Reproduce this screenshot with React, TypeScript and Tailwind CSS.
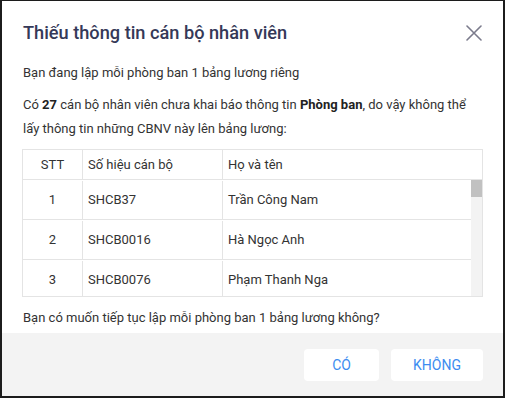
const rows = [
  { stt: 1, code: "SHCB37", name: "Trần Công Nam" },
  { stt: 2, code: "SHCB0016", name: "Hà Ngọc Anh" },
  { stt: 3, code: "SHCB0076", name: "Phạm Thanh Nga" },
];

const App = () => {
  return (
    <div className="h-[400px] w-[506px] bg-white font-['Roboto',sans-serif] text-[13px] text-[#333]">
      <div className="flex h-[398px] w-[505px] flex-col border-t border-r-2 border-b-2 border-l-2 border-[#1c1c1c]">
        {/* header */}
        <div className="flex h-[60px] items-center justify-between pt-[3px] pr-[21px] pl-[21px]">
          <h1 className="text-[18.2px] font-medium text-[#353958]">
            Thiếu thông tin cán bộ nhân viên
          </h1>
          <svg width="16" height="16" viewBox="0 0 16 16" className="text-[#7b7b8c]">
            <path d="M1 1L15 15M15 1L1 15" stroke="currentColor" strokeWidth="1.6" strokeLinecap="round" />
          </svg>
        </div>

        {/* body */}
        <div className="flex flex-col pr-[20px] pb-[3px] pl-[20px] leading-6">
          <p className="pl-px">Bạn đang lập mỗi phòng ban 1 bảng lương riêng</p>
          <p className="mt-2 pl-px">
            Có <b className="font-bold text-[#222]">27</b> cán bộ nhân viên chưa khai báo thông tin{" "}
            <b className="font-bold text-[#222]">Phòng ban</b>, do vậy không thể lấy thông tin những CBNV
            này lên bảng lương:
          </p>

          <div className="mt-2 border border-[#e4e4e4]">
            <div className="flex h-[30px] items-center border-b border-[#e4e4e4]">
              <div className="flex h-full w-[60px] items-center justify-center border-r border-[#e4e4e4]">STT</div>
              <div className="flex h-full w-[140px] items-center border-r border-[#e4e4e4] pl-[5px]">
                Số hiệu cán bộ
              </div>
              <div className="flex h-full flex-1 items-center pl-[5px]">Họ và tên</div>
            </div>
            <div className="flex h-[116px]">
              <div className="flex-1 overflow-hidden">
                {rows.map((r) => (
                  <div key={r.stt} className="flex h-[40px] border-b border-[#e4e4e4] pt-px">
                    <div className="flex w-[60px] items-center justify-center border-r border-[#e4e4e4]">{r.stt}</div>
                    <div className="flex w-[140px] items-center border-r border-[#e4e4e4] pl-[5px]">{r.code}</div>
                    <div className="flex flex-1 items-center pl-[5px]">{r.name}</div>
                  </div>
                ))}
              </div>
              <div className="w-[11px] bg-[#f3f3f3]">
                <div className="h-[17px] bg-[#c1c1c1]"></div>
              </div>
            </div>
          </div>

          <p className="mt-[9px] pl-px">Bạn có muốn tiếp tục lập mỗi phòng ban 1 bảng lương không?</p>
        </div>

        {/* footer */}
        <div className="flex flex-1 items-start justify-end gap-3 bg-[#f3f3f3] pt-4 pr-[20px]">
          <button className="h-[32px] w-[75px] rounded-[4px] bg-white text-[14px] text-[#3c8cf0]">CÓ</button>
          <button className="h-[32px] w-[92px] rounded-[4px] bg-white text-[14px] text-[#3c8cf0]">KHÔNG</button>
        </div>
      </div>
    </div>
  );
};

export default App;
